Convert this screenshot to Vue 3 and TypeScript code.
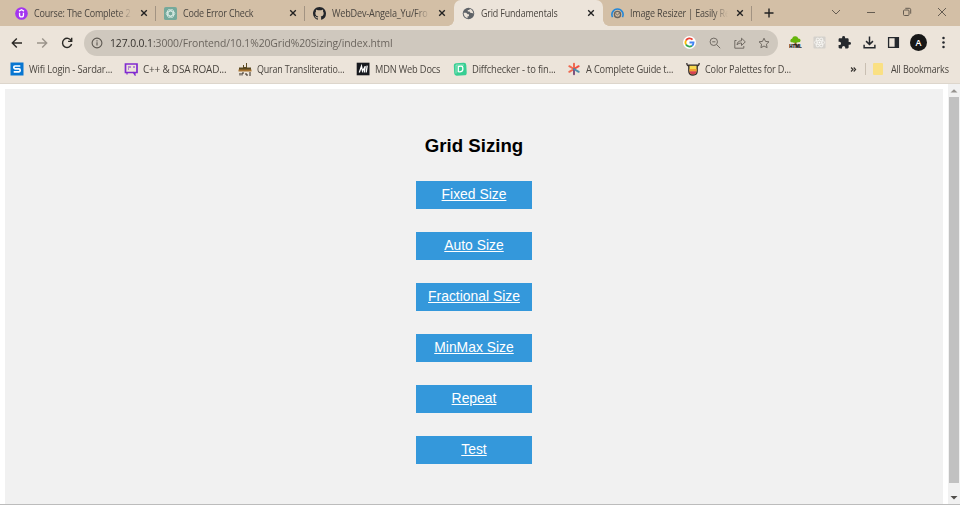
<script setup lang="ts">
interface Tab { title: string; icon: string; fit: number; active?: boolean; fade?: boolean }
interface Bookmark { title: string; icon: string; width: number; fit: number }

const tabs: Tab[] = [
  { title: 'Course: The Complete 2', icon: 'udemy', fit: 0.875, fade: true },
  { title: 'Code Error Check', icon: 'gpt', fit: 0.875 },
  { title: 'WebDev-Angela_Yu/Fro', icon: 'github', fit: 0.885, fade: true },
  { title: 'Grid Fundamentals', icon: 'globe', fit: 0.867, active: true },
  { title: 'Image Resizer | Easily Re', icon: 'resizer', fit: 0.875, fade: true },
]
const bookmarks: Bookmark[] = [
  { title: 'Wifi Login - Sardar...', icon: 'sophos', width: 114, fit: 0.915 },
  { title: 'C++ & DSA ROAD...', icon: 'board', width: 114, fit: 0.965 },
  { title: 'Quran Transliteratio...', icon: 'quran', width: 118, fit: 0.868 },
  { title: 'MDN Web Docs', icon: 'mdn', width: 97, fit: 0.9 },
  { title: 'Diffchecker - to fin...', icon: 'diff', width: 114, fit: 0.913 },
  { title: 'A Complete Guide t...', icon: 'star', width: 119, fit: 0.9 },
  { title: 'Color Palettes for D...', icon: 'palette', width: 120, fit: 0.887 },
]
const links: string[] = ['Fixed Size', 'Auto Size', 'Fractional Size', 'MinMax Size', 'Repeat', 'Test']
const condense = (fit: number) => ({ transform: `scaleX(${fit})` })
</script>

<template>
  <div class="window">
    <header class="tabstrip">
      <div v-for="t in tabs" :key="t.title" class="tab" :class="{ active: t.active }">
        <svg class="fav" viewBox="0 0 14 14">
          <g v-if="t.icon === 'udemy'">
            <circle cx="7" cy="7" r="6.8" fill="#a435f0" />
            <path d="M4.300 4.500 7 3l2.700 1.500M4.900 6.200v2.400q0 2.100 2.100 2.100t2.100-2.100V6.200" fill="none" stroke="#fff" stroke-width="1.400" />
          </g>
          <g v-else-if="t.icon === 'gpt'">
            <rect width="14" height="14" rx="2" fill="#75a99b" />
            <g fill="none" stroke="#e9f5ef" stroke-width=".8">
              <ellipse cx="7" cy="7" rx="4.600" ry="2.500" />
              <ellipse cx="7" cy="7" rx="4.600" ry="2.500" transform="rotate(60 7 7)" />
              <ellipse cx="7" cy="7" rx="4.600" ry="2.500" transform="rotate(120 7 7)" />
            </g>
          </g>
          <path v-else-if="t.icon === 'github'" transform="scale(.875)" fill="#22252a" d="M8 0C3.580 0 0 3.580 0 8c0 3.540 2.290 6.530 5.470 7.590.4.070.55-.17.55-.38 0-.19-.01-.82-.01-1.490-2.010.37-2.530-.49-2.690-.94-.09-.23-.48-.94-.82-1.130-.28-.15-.68-.52-.01-.53.630-.01 1.080.58 1.230.82.720 1.210 1.870.87 2.330.66.070-.52.28-.87.51-1.070-1.780-.2-3.640-.89-3.640-3.950 0-.87.31-1.590.82-2.150-.08-.2-.36-1.020.08-2.120 0 0 .67-.21 2.200.82.640-.18 1.320-.27 2-.27s1.360.09 2 .27c1.530-1.040 2.200-.82 2.200-.82.440 1.100.16 1.920.08 2.120.51.56.82 1.270.82 2.150 0 3.070-1.870 3.750-3.650 3.950.29.25.54.73.54 1.480 0 1.070-.01 1.930-.01 2.200 0 .21.15.46.55.38A8.010 8.010 0 0 0 16 8c0-4.420-3.580-8-8-8z" />
          <g v-else-if="t.icon === 'globe'">
            <circle cx="7" cy="7" r="6.200" fill="#5f6368" />
            <path d="M1.700 6.200h2.800l1.600 1.500 1.400.1v2.100H6v2.200C3.600 11.600 1.700 9.300 1.700 6.200ZM8.200 1.900 8 3.200H6.200v1.700h1.900l.8 1.400 2.900.4.300 1.500c.5-2.700-1.200-5.500-3.900-6.300Z" fill="#ece4da" />
          </g>
          <g v-else fill="none">
            <path d="M1.700 11A6 6 0 1 1 12.300 11" stroke="#2487d8" stroke-width="1.700" />
            <circle cx="7" cy="8" r="3.300" stroke="#68645f" stroke-width="1.500" />
            <path d="m5 7 2 1.500L9.800 6" stroke="#68645f" />
          </g>
        </svg>
        <span class="title" :class="{ fade: t.fade }"><span class="label" :style="condense(t.fit)">{{ t.title }}</span></span>
        <svg class="x" viewBox="0 0 8 8"><path d="m1.200 1.200 5.600 5.600m0-5.600L1.200 6.800" stroke="#222" stroke-width="1.350" /></svg>
      </div>
      <svg class="plus" viewBox="0 0 10 10"><path d="M5 .5v9M.5 5h9" stroke="#222" stroke-width="1.400" /></svg>
      <div class="controls">
        <svg viewBox="0 0 10 10"><path d="m1 3 4 4 4-4" /></svg>
        <svg viewBox="0 0 10 10"><path d="M1 5.500h8" /></svg>
        <svg viewBox="0 0 10 10"><rect x="1.500" y="3" width="5.500" height="5.500" rx="1" /><path d="M3.300 1.300h4q1.400 0 1.400 1.400v4" /></svg>
        <svg viewBox="0 0 10 10"><path d="m1 1 8 8m0-8L1 9" /></svg>
      </div>
    </header>

    <div class="toolbar">
      <div class="nav">
        <svg viewBox="0 0 12 12"><path d="M11 6H1.500m4.300-4.500L1.300 6l4.500 4.500" stroke="#2b2925" /></svg>
        <svg viewBox="0 0 12 12"><path d="M1 6h9.500M6.200 1.500 10.700 6l-4.500 4.500" stroke="#9b948b" /></svg>
        <svg viewBox="0 0 12 12"><path d="M10.300 3.900A4.600 4.600 0 1 0 10.600 7M10.700.8v3.600H7.100" stroke="#2b2925" /></svg>
      </div>
      <div class="address">
        <svg class="info" viewBox="0 0 12 12"><circle cx="6" cy="6" r="4.900" /><path d="M6 5.300v3.300M6 3.300v1.200" /></svg>
        <span class="url"><b>127.0.0.1</b>:3000/Frontend/10.1%20Grid%20Sizing/index.html</span>
        <span class="google">
          <svg viewBox="0 0 12 12" fill="none" stroke-width="2">
            <path d="M9.300 2.800A4.400 4.400 0 0 0 2.200 3.800" stroke="#ea4335" />
            <path d="M2.200 3.800a4.400 4.400 0 0 0 0 4.400" stroke="#fbbc05" />
            <path d="M2.200 8.200a4.400 4.400 0 0 0 6.500 1.300" stroke="#34a853" />
            <path d="M8.700 9.500A4.300 4.300 0 0 0 10.400 6H6" stroke="#4285f4" />
          </svg>
        </span>
        <svg class="tool" viewBox="0 0 12 12"><circle cx="4.800" cy="4.800" r="3.700" /><path d="m7.600 7.600 3.600 3.600M3.200 4.800h3.200" /></svg>
        <svg class="tool" viewBox="0 0 12 12"><path d="M2.500 3.500H.8v7.700h9V9M3 8c.3-3 1.900-4.200 4.500-4.200V1.200l3.800 3.700-3.800 3.600V6C5.500 6 4.200 6.500 3 8Z" /></svg>
        <svg class="tool" viewBox="0 0 12 12"><path d="m6 1.200 1.500 3.200 3.500.4-2.600 2.400.7 3.500L6 9l-3.100 1.700.7-3.500L1 4.800l3.500-.4Z" /></svg>
      </div>
      <div class="extensions">
        <span class="html-tree">
          <svg viewBox="0 0 14 14">
            <path d="M6.200 5h1.600l.5 5H5.700Z" fill="#8b5524" />
            <path d="M3.500 6.800Q1 6.700 1.500 4.500 2 3 3.300 3 4 .3 6.500.4q2.700-.3 3.500 2.400 2.600.2 2.500 2.200-.3 2-3 1.800-1.500 1-3 .1-1.500.7-3-.1Z" fill="#66b50b" />
            <text x="7" y="13.400" text-anchor="middle">HTML</text>
          </svg>
        </span>
        <svg viewBox="0 0 14 14"><rect x=".5" y=".5" width="13" height="13" rx="1" fill="#d4d1cc" /><g fill="none" stroke="#f8f6f3" stroke-width=".9"><ellipse cx="7" cy="7" rx="5.500" ry="2.200" /><ellipse cx="7" cy="7" rx="5.500" ry="2.200" transform="rotate(60 7 7)" /><ellipse cx="7" cy="7" rx="5.500" ry="2.200" transform="rotate(120 7 7)" /></g><circle cx="7" cy="7" r="1" fill="#fff" /></svg>
        <svg viewBox="1 1 22 22"><path fill="#25282d" d="M20.500 11H19V7c0-1.100-.9-2-2-2h-4V3.500a2.500 2.500 0 0 0-5 0V5H4c-1.100 0-2 .9-2 2v3.800h1.500a2.700 2.700 0 0 1 0 5.400H2V20c0 1.100.9 2 2 2h3.800v-1.500a2.700 2.700 0 0 1 5.400 0V22H17c1.100 0 2-.9 2-2v-4h1.500a2.500 2.500 0 0 0 0-5z" /></svg>
        <svg viewBox="0 0 14 14" fill="none" stroke="#25282d" stroke-width="1.600"><path d="M7 .5v8.700M3.300 5.500 7 9.200l3.700-3.700M1.200 9.500v3.200h11.600V9.500" /></svg>
        <svg viewBox="0 0 14 14"><path d="M1.700 1.700h10.600v10.600H1.700Z" fill="none" stroke="#25282d" stroke-width="1.400" /><path d="M8.200 1.500h4.300v11H8.200Z" fill="#25282d" /></svg>
        <span class="avatar">A</span>
        <svg viewBox="0 0 14 14" fill="#25282d"><circle cx="7" cy="2.200" r="1.350" /><circle cx="7" cy="7" r="1.350" /><circle cx="7" cy="11.800" r="1.350" /></svg>
      </div>
    </div>

    <div class="bookmarks">
      <div v-for="b in bookmarks" :key="b.title" class="bookmark" :style="{ width: b.width + 'px' }">
        <svg viewBox="0 0 14 14">
          <g v-if="b.icon === 'sophos'"><rect x=".5" y=".5" width="13" height="13" fill="#0876d1" /><path d="M10.300 4H5q-1.200 0-1.200 1.300T5 6.800h4q1.200 0 1.200 1.500T9 9.900H3.700" fill="none" stroke="#fff" stroke-width="1.700" /></g>
          <g v-else-if="b.icon === 'board'" fill="none" stroke="#812bd0"><path d="M1.500 2h11.500v8.500H1.500Z" stroke-width="1.700" /><path d="M4 5h3m2 0h2M4 7h1m4 3 2 3v-3M3 10v2.500" stroke-width="1.200" /></g>
          <g v-else-if="b.icon === 'quran'"><path d="M1 5.500h4V3h1v2h2V1h1v4.500h4V8H1Z" fill="#594820" /><path d="M.5 7.500h13v2H.5Z" fill="#a87431" /><path d="M2 11v2.500m2-2.500v2.500m0-2.500h2M8 11v2h2m1-2h2m-2 2h2" stroke="#302820" fill="none" /></g>
          <g v-else-if="b.icon === 'mdn'"><rect x=".7" y=".7" width="12.800" height="12.600" fill="#17191e" /><path d="m3.300 10.500 2.200-6.300 1 5 2.800-5-1 6.300M11.200 3.700l-1 6.800" fill="none" stroke="#fff" stroke-width="1.300" /></g>
          <g v-else-if="b.icon === 'diff'"><rect x="1" y="1" width="12.500" height="12.500" rx="2.500" fill="#37ce93" transform="rotate(-3 7 7)" /><path d="M5.300 4.500q4.200-1 4.500 1v2.200q-.4 2.600-4.500 2Z" fill="none" stroke="#fff" stroke-width="1.300" /><path d="M3 11.500V3h8" fill="none" stroke="#b9f2d7" stroke-width=".7" /></g>
          <g v-else-if="b.icon === 'star'" fill="none" stroke-width="2" stroke-linecap="round"><path d="M7 7V1.800M7 7 2.300 4.200M7 7l-4.700 2.800" stroke="#ef6950" /><path d="m7 7 4.700-2.800" stroke="#ef4e42" /><path d="M7 7v5.200" stroke="#7e527e" /><path d="m7 7 4.700 2.800" stroke="#4d8fac" /></g>
          <g v-else><path d="M2.800 3.200h8.400V9q0 4-4.200 4T2.800 9Z" fill="#f7d84e" stroke="#302a2b" stroke-width="1.300" /><path d="M3.500 7h7v2.200h-7Z" fill="#f0a032" /><path d="M3.500 9.200h7q-.3 3.100-3.500 3.100T3.500 9.200Z" fill="#d74054" /><path d="M.8 1q0 3 2.200 3M13.200 1q0 3-2.200 3" fill="none" stroke="#302a2b" stroke-width="1.200" /></g>
        </svg>
        <span class="label" :style="condense(b.fit)">{{ b.title }}</span>
      </div>
      <div class="all">
        <svg class="more" viewBox="0 0 8 8"><path d="m1.200 1.700 2.200 2.300-2.200 2.300m3-4.600L6.400 4 4.200 6.300" fill="none" stroke="#34312e" stroke-width="1.300" /></svg>
        <i class="divider"></i>
        <i class="folder"></i>
        <span class="label all-label">All Bookmarks</span>
      </div>
    </div>

    <div class="viewport">
      <main class="content">
        <h1>Grid Sizing</h1>
        <nav class="links"><a v-for="l in links" :key="l" href="#">{{ l }}</a></nav>
      </main>
      <div class="scrollbar">
        <svg viewBox="0 0 12 12"><path d="M2.500 8 6 4.800 9.500 8Z" fill="#96938f" /></svg>
        <div class="thumb"></div>
        <svg viewBox="0 0 12 12"><path d="M2.500 4.500h7L6 8Z" fill="#504e4a" /></svg>
      </div>
    </div>
  </div>
</template>

<style>
body { margin: 0; overflow: hidden; background: #fff; }
</style>
<style scoped>
* { box-sizing: border-box; }
.window { width: 960px; height: 505px; display: flex; flex-direction: column; overflow: hidden; font-family: "Open Sans", "Noto Sans", sans-serif; font-size: 10.300px; color: #4b4640; background: #fff; border-bottom: 1px solid #bcbcbc; }
svg { display: block; flex: none; }
.label { display: inline-block; flex: none; transform-origin: 0 50%; line-height: 16px; letter-spacing: -.2px; white-space: nowrap; }
.tabstrip { height: 26px; flex: none; display: flex; align-items: center; padding-left: 7px; background: #d3bfa6; }
.tab { position: relative; width: 149px; height: 26px; flex: none; display: flex; align-items: center; padding-left: 8px; }
.tab:not(.active):not(:nth-child(3))::after { content: ""; position: absolute; right: 0; top: 6px; height: 15px; width: 1px; background: #a29382; }
.tab.active { background: #ece4da; border-radius: 7px 7px 0 0; }
.tab.active::before, .tab.active::after { content: ""; position: absolute; bottom: 0; width: 6px; height: 6px; }
.tab.active::before { left: -6px; background: radial-gradient(circle at 0 0, #d3bfa6 5.500px, #ece4da 6px); }
.tab.active::after { right: -6px; background: radial-gradient(circle at 100% 0, #d3bfa6 5.500px, #ece4da 6px); }
.fav { width: 13px; height: 13px; }
.title { width: 99px; height: 16px; flex: none; margin-left: 6px; white-space: nowrap; }
.fade { -webkit-mask-image: linear-gradient(90deg, #000 84%, transparent 99%); mask-image: linear-gradient(90deg, #000 84%, transparent 99%); }
.x { width: 8px; height: 8px; margin-left: 7px; }
.plus { width: 10px; height: 10px; margin-left: 12px; }
.controls { display: flex; gap: 25.500px; margin: -3px 13px 0 auto; }
.controls svg { width: 10px; height: 10px; fill: none; stroke: #655c51; stroke-width: 1; }
.toolbar { height: 33px; flex: none; display: flex; align-items: center; background: #ece4da; }
.nav { width: 84px; display: flex; gap: 13px; padding-left: 11px; }
.nav svg { width: 12px; height: 12px; fill: none; stroke-width: 1.400; }
.address { width: 694px; height: 26px; display: flex; align-items: center; padding: 0 7px; border-radius: 13px; background: #cfc8be; }
.info { width: 12px; height: 12px; fill: none; stroke: #5c5750; stroke-width: 1.100; }
.url { margin-left: 7px; font-size: 11.300px; letter-spacing: -.1px; color: #6b655e; white-space: nowrap; transform: scaleX(.918); transform-origin: 0 50%; }
.url b { font-weight: 400; color: #35312d; }
.google { display: grid; place-items: center; width: 13px; height: 13px; margin-left: auto; margin-right: 13px; border-radius: 50%; background: #fff; }
.google svg { width: 11px; height: 11px; }
.tool { width: 12px; height: 12px; margin-right: 12.500px; fill: none; stroke: #716b64; stroke-width: 1; }
.tool:last-child { margin-right: 1px; }
.extensions { display: flex; align-items: center; gap: 11.700px; margin-left: 10.500px; }
.extensions svg { width: 13px; height: 13px; }
.html-tree text { font: 900 4.800px "Liberation Sans", sans-serif; fill: #111; stroke: #111; stroke-width: .25px; }
.avatar { display: grid; place-items: center; width: 17px; height: 17px; margin: 0 -2px; border-radius: 50%; background: #171717; color: #fff; font-size: 9px; font-weight: 600; }
.bookmarks { height: 25px; flex: none; display: flex; align-items: center; padding: 0 0 4px 10px; background: #ece4da; border-bottom: 1px solid #ddd6cc; }
.bookmark { display: flex; align-items: center; gap: 5px; flex: none; white-space: nowrap; }
.bookmark svg { width: 14px; height: 14px; }
.all { display: flex; align-items: center; margin-left: 44px; }
.all-label { transform: scaleX(.875); }
.more { width: 7px; height: 7px; }
.divider { width: 1px; height: 12px; margin-left: 8px; background: #c9bfb2; }
.folder { width: 10px; height: 12px; margin: 0 8px 0 7px; background: #fae083; border-radius: 1px; }
.viewport { flex: 1; min-height: 0; display: flex; justify-content: space-between; padding-left: 5px; }
.content { width: 938px; margin-top: 5px; display: flex; flex-direction: column; align-items: center; background: #f1f1f1; font-family: "Liberation Sans", Arial, sans-serif; }
h1 { margin: 46px 0 24px; font-size: 18.650px; line-height: 22px; color: #000; }
.links { width: 116px; display: flex; flex-direction: column; gap: 23px; }
.links a { height: 28px; line-height: 27px; text-align: center; background: #3498db; color: #fff; font-size: 13.900px; text-decoration: underline; white-space: nowrap; }
.scrollbar { width: 12px; flex: none; display: flex; flex-direction: column; align-items: center; background: #f1f1f1; }
.scrollbar svg { width: 12px; height: 13px; }
.thumb { width: 10px; height: 386px; margin-bottom: 8px; background: #c1c1c1; }
</style>
